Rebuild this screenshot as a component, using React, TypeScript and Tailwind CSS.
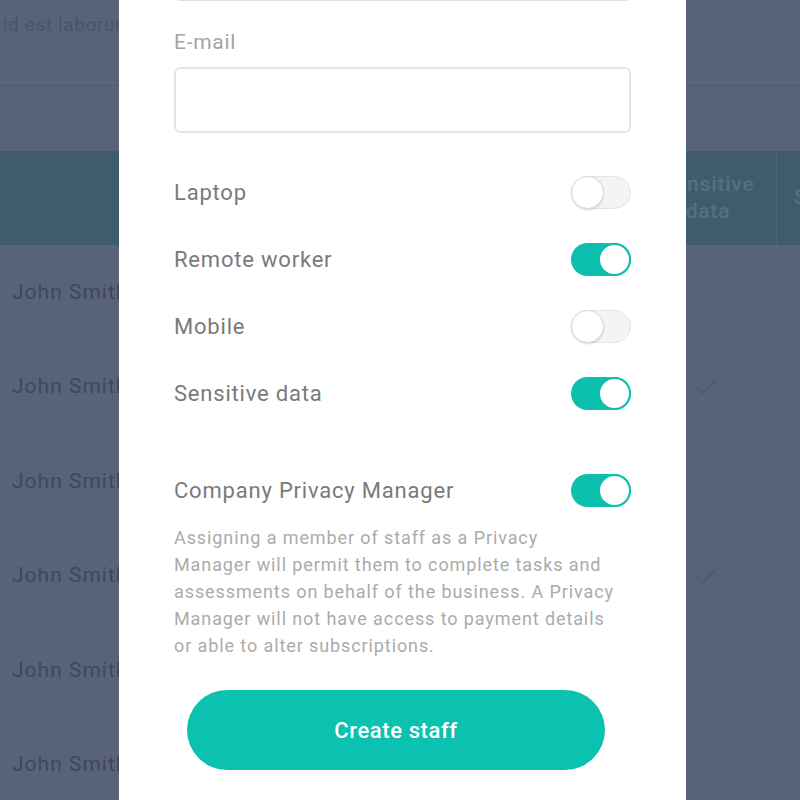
import React from "react";

function Toggle({ on }: { on: boolean }) {
  return (
    <div
      className={
        on
          ? "relative w-[60px] h-[33px] rounded-full bg-[#0dc0ad] shrink-0"
          : "relative w-[60px] h-[33px] rounded-full bg-[#f4f4f4] border border-[#e4e4e4] shrink-0"
      }
    >
      {on ? (
        <div className="absolute right-0 top-0 w-[33px] h-[33px] rounded-full bg-white border-2 border-[#0dc0ad]" />
      ) : (
        <div className="absolute left-[-1px] top-[-1px] w-[33px] h-[33px] rounded-full bg-white border border-[#dcdcdc] shadow-[0_1px_2px_rgba(0,0,0,0.15)]" />
      )}
    </div>
  );
}

function Check() {
  return (
    <svg width="22" height="18" viewBox="0 0 22 18" fill="none">
      <path d="M2 10 L8 15 L20 3" stroke="#515c70" strokeWidth="2.5" strokeLinecap="round" strokeLinejoin="round" />
    </svg>
  );
}

const rows = [false, true, false, true, false, false];

export default function App() {
  return (
    <div className="relative w-[800px] h-[800px] overflow-hidden bg-[#586379] font-['Roboto',sans-serif]">
      {/* dimmed page behind */}
      <div className="flex flex-col">
        <div className="h-[83px] border-b border-[#626d83] px-[3px] pt-[13px] shrink-0">
          <div className="text-[19px] leading-[24px] tracking-[0.6px] text-[#4a5467] whitespace-nowrap">id est laborum.</div>
        </div>
        <div className="h-[68px] shrink-0" />
        <div className="h-[94px] bg-[#3e5c6e] flex shrink-0">
          <div className="w-[640px] shrink-0" />
          <div className="w-[137px] shrink-0 border-r border-[#4a6577] flex items-center justify-center">
            <div className="text-[21px] leading-[27px] tracking-[0.8px] font-medium text-[#56707f] text-center">
              Sensitive
              <br />
              data
            </div>
          </div>
          <div className="flex-1 min-w-0 flex items-center pl-[17px] overflow-hidden">
            <span className="text-[21px] font-medium tracking-[0.6px] text-[#56707f] whitespace-nowrap">Status</span>
          </div>
        </div>
        {rows.map((c, i) => (
          <div key={i} className="h-[94.5px] flex items-center shrink-0">
            <div className="w-[640px] shrink-0 pl-[12px] text-[21px] tracking-[1px] text-[#3f485a] whitespace-nowrap">John Smith</div>
            <div className="w-[137px] shrink-0 h-full border-r border-[#5c667c] flex items-center pl-[55px]">
              {c ? <Check /> : null}
            </div>
          </div>
        ))}
      </div>

      {/* modal */}
      <div className="absolute left-[119px] top-0 w-[567px] h-[800px] bg-white px-[55px] flex flex-col">
        <div className="h-[66px] -mt-[65px] border border-[#dcdde8] rounded-md shrink-0" />
        <div className="mt-[29px] text-[21px] leading-[24px] tracking-[0.7px] text-[#a4a4a4]">E-mail</div>
        <div className="mt-[13px] h-[66px] border-2 border-[#e4e5ee] rounded-md shrink-0" />
        <div className="mt-[25.5px] flex flex-col shrink-0">
          {[
            ["Laptop", false],
            ["Remote worker", true],
            ["Mobile", false],
            ["Sensitive data", true],
          ].map(([label, on]) => (
            <div key={label as string} className="h-[67px] flex items-center justify-between">
              <span className="text-[22px] tracking-[0.8px] text-[#7a7a7a]">{label as string}</span>
              <Toggle on={on as boolean} />
            </div>
          ))}
        </div>
        <div className="mt-[30px] h-[67px] flex items-center justify-between shrink-0">
          <span className="text-[22px] tracking-[0.8px] text-[#7a7a7a]">Company Privacy Manager</span>
          <Toggle on={true} />
        </div>
        <p className="w-[442px] text-[18px] leading-[27px] tracking-[0.9px] text-[#ababab] shrink-0">
          Assigning a member of staff as a Privacy Manager will permit them to complete tasks and assessments on behalf
          of the business. A Privacy Manager will not have access to payment details or able to alter subscriptions.
        </p>
        <button className="mt-[31.5px] ml-[13px] w-[418px] h-[80px] rounded-full bg-[#0bc2b0] text-white text-[22px] tracking-[0.6px] font-medium shrink-0">
          Create staff
        </button>
      </div>
    </div>
  );
}
